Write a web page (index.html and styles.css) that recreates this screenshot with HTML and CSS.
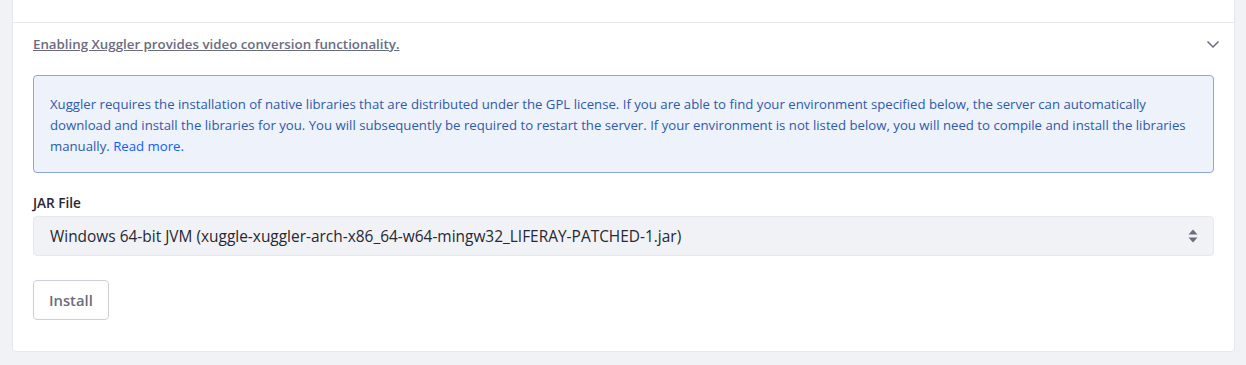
FILE: index.html
```html
<!DOCTYPE html>
<html lang="en">
<head>
    <meta charset="UTF-8">
    <title>Xuggler</title>
    <link rel="stylesheet" href="styles.css">
</head>
<body>
    <div class="panel">
        <div class="panel-top"></div>

        <!-- Xuggler section -->
        <div class="panel-header">
            <a href="#" class="panel-title">Enabling Xuggler provides video conversion functionality.</a>
            <svg class="chevron" width="14" height="14" viewBox="0 0 14 14">
                <path d="M1.5 4.5 L7 10 L12.5 4.5" fill="none" stroke="#6b6c7e" stroke-width="1.5"/>
            </svg>
        </div>

        <div class="panel-body">
            <div class="alert">
                Xuggler requires the installation of native libraries that are distributed under the GPL license. If you are able to find your environment specified below, the server can automatically download and install the libraries for you. You will subsequently be required to restart the server. If your environment is not listed below, you will need to compile and install the libraries manually. <a href="#">Read more.</a>
            </div>

            <div class="form-group">
                <label for="jarFile">JAR File</label>
                <div class="select">
                    <span>Windows 64-bit JVM (xuggle-xuggler-arch-x86_64-w64-mingw32_LIFERAY-PATCHED-1.jar)</span>
                    <svg width="10" height="16" viewBox="0 0 10 16">
                        <path d="M5 1.5 L9.5 6.5 H0.5 Z" fill="#6b6c7e"/>
                        <path d="M5 14.5 L9.5 9.5 H0.5 Z" fill="#6b6c7e"/>
                    </svg>
                </div>
            </div>

            <button class="btn">Install</button>
        </div>
    </div>
</body>
</html>
```

FILE: styles.css
```css
body {
    margin: 0;
    background-color: #f1f2f5;
    font-family: "Open Sans", "Noto Sans", sans-serif;
    color: #272833;
}
.panel {
    margin: 0 11px 0 12px;
    background-color: #fff;
    border: 1px solid #e7e7ed;
    border-top: none;
    border-radius: 0 0 4px 4px;
    height: 352px;
    box-sizing: border-box;
}
.panel-top {
    height: 22px;
    border-bottom: 1px solid #e7e7ed;
}
.panel-header {
    display: flex;
    align-items: center;
    justify-content: space-between;
    padding: 0 14px 0 20px;
    height: 42px;
}
.panel-title {
    color: #6b6c7e;
    font-size: 13.3px;
    font-weight: 600;
    text-decoration: underline;
}
.panel-body {
    padding: 10px 20px 0 20px;
}
.alert {
    background-color: #eef2fa;
    border: 1px solid #89a7e0;
    border-radius: 4px;
    color: #2e5aac;
    font-size: 13.2px;
    line-height: 21px;
    padding: 18px 16px 15px 16px;
}
.alert a {
    color: #0b5fff;
    text-decoration: none;
}
.form-group {
    margin-top: 20px;
}
.form-group label {
    display: block;
    font-size: 13.6px;
    line-height: 19px;
    font-weight: 600;
    margin-bottom: 4px;
}
.select {
    display: flex;
    align-items: center;
    justify-content: space-between;
    height: 40px;
    box-sizing: border-box;
    padding: 0 15px 0 16px;
    background-color: #f1f2f5;
    border: 1px solid #e7e7ed;
    border-radius: 4px;
    font-size: 15.45px;
}
.btn {
    margin-top: 24px;
    height: 40px;
    padding: 0 15px;
    background-color: #fff;
    border: 1px solid #cdced9;
    border-radius: 4px;
    color: #6b6c7e;
    font-family: inherit;
    font-size: 14.8px;
    font-weight: 600;
}
```
